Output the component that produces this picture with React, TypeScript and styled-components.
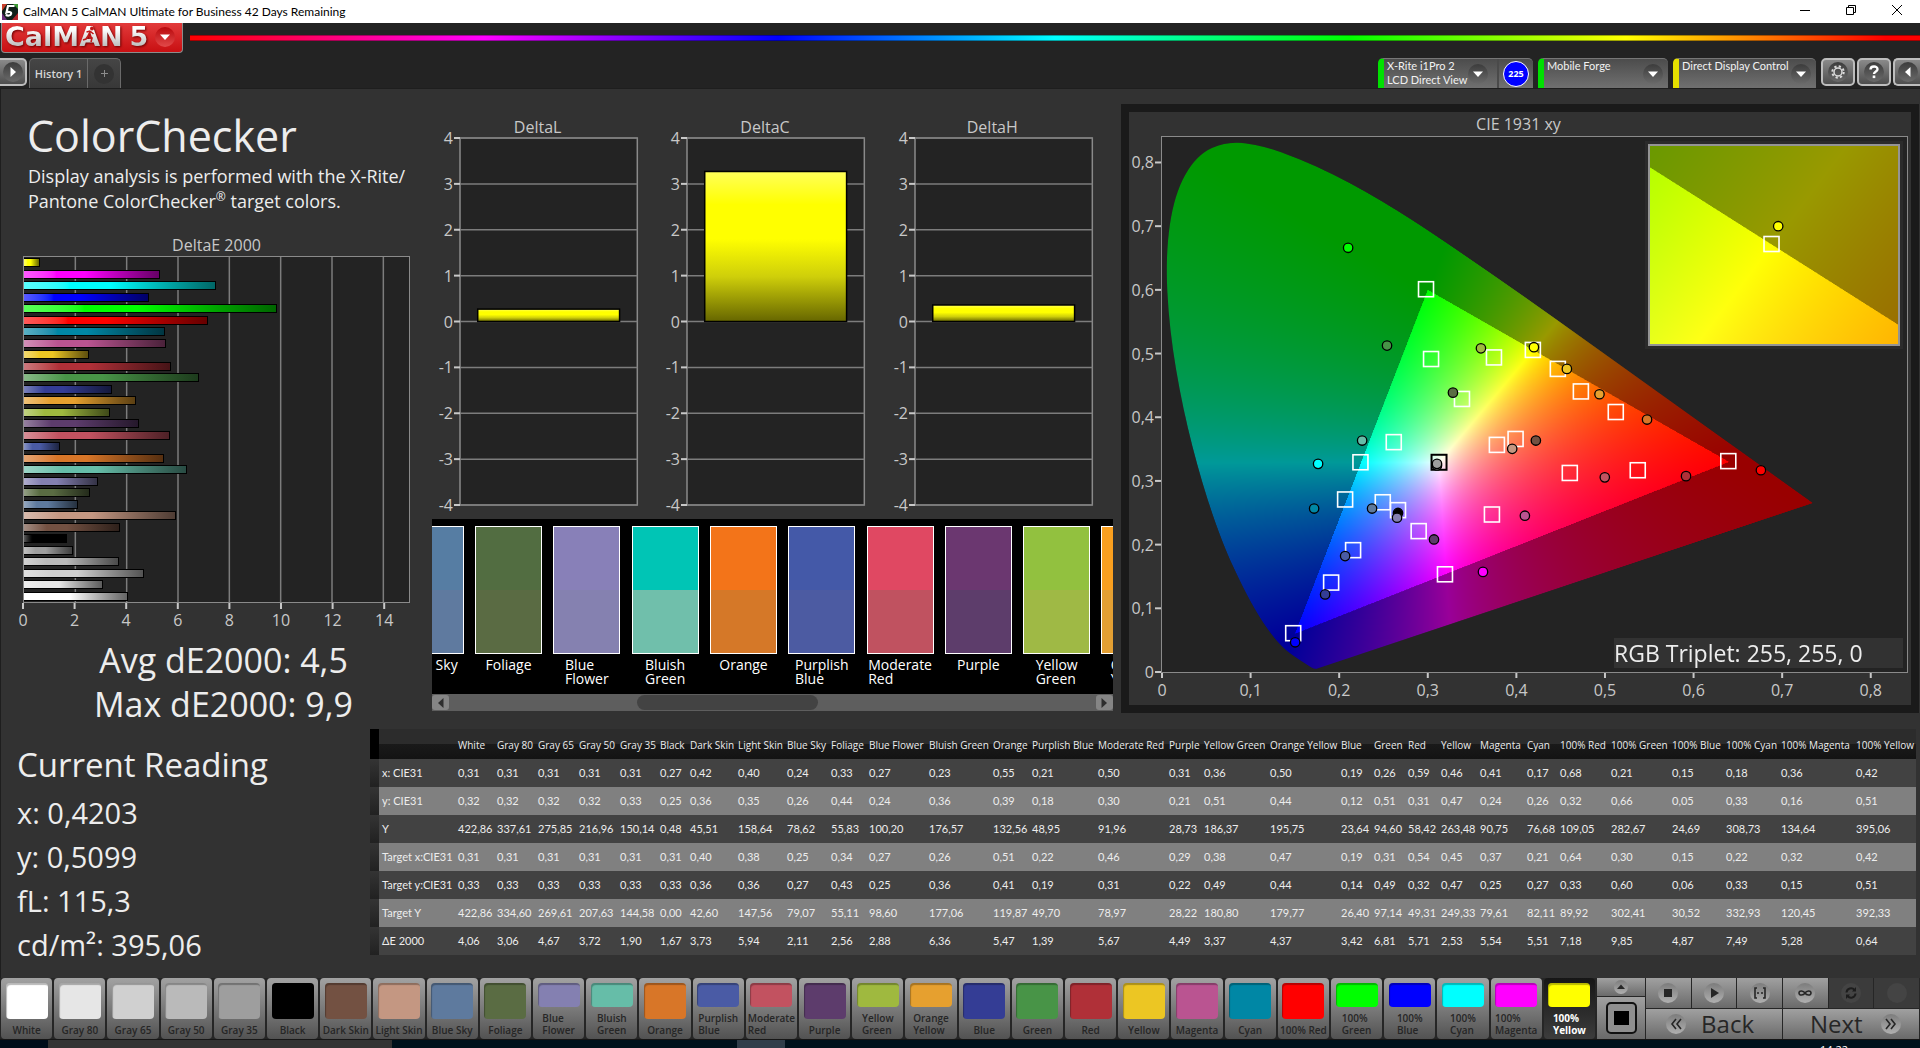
import React, { useLayoutEffect, useRef } from "react";
import styled, { createGlobalStyle, css } from "styled-components";

/* ---------- theme ---------- */

const sans = `"Open Sans", "Noto Sans", sans-serif`;
const compact = `Lato, "Open Sans", sans-serif`;
const ink = "#ededed";
const axisInk = "#c8c8c8";
const axisLine = "#8a8a8a";
const plotBg = "#232323";

const GlobalStyle = createGlobalStyle`
  * { box-sizing: border-box; }
  body { margin: 0; background: #323232; color: ${ink}; font-family: ${sans}; }
  h1, h2, p, dl, dd, dt, ul, figure { margin: 0; padding: 0; }
  ul { list-style: none; }
  button { font-family: inherit; margin: 0; padding: 0; border: 0; background: none; color: inherit; }
`;

/* ---------- data ---------- */

type Patch = {
  name: string;
  lines: string[];
  color: string;
  values: string[];
};

const patch = (name: string, color: string, values: string, lines: string[] = [name]): Patch => ({
  name,
  color,
  lines,
  values: values.split(" "),
});

const patches: Patch[] = [
  patch("White", "#ffffff", "0,31 0,32 422,86 0,31 0,33 422,86 4,06"),
  patch("Gray 80", "#e6e6e6", "0,31 0,32 337,61 0,31 0,33 334,60 3,06"),
  patch("Gray 65", "#d0d0d0", "0,31 0,32 275,85 0,31 0,33 269,61 4,67"),
  patch("Gray 50", "#bababa", "0,31 0,32 216,96 0,31 0,33 207,63 3,72"),
  patch("Gray 35", "#9e9e9e", "0,31 0,33 150,14 0,31 0,33 144,58 1,90"),
  patch("Black", "#000000", "0,27 0,25 0,48 0,31 0,33 0,00 1,67"),
  patch("Dark Skin", "#735142", "0,42 0,36 45,51 0,40 0,36 42,60 3,73"),
  patch("Light Skin", "#c49782", "0,40 0,35 158,64 0,38 0,36 147,56 5,94"),
  patch("Blue Sky", "#5e7a9e", "0,24 0,26 78,62 0,25 0,27 79,07 2,11"),
  patch("Foliage", "#5a6c43", "0,33 0,44 55,83 0,34 0,43 55,11 2,56"),
  patch("Blue Flower", "#8480b1", "0,27 0,24 100,20 0,27 0,25 98,60 2,88", ["Blue", "Flower"]),
  patch("Bluish Green", "#66bda8", "0,23 0,36 176,57 0,26 0,36 177,06 6,36", ["Bluish", "Green"]),
  patch("Orange", "#d87628", "0,55 0,39 132,56 0,51 0,41 119,87 5,47"),
  patch("Purplish Blue", "#4a5ba5", "0,21 0,18 48,95 0,22 0,19 49,70 1,39", ["Purplish", "Blue"]),
  patch("Moderate Red", "#c25260", "0,50 0,30 91,96 0,46 0,31 78,97 5,67", ["Moderate", "Red"]),
  patch("Purple", "#5d3c6c", "0,31 0,21 28,73 0,29 0,22 28,22 4,49"),
  patch("Yellow Green", "#9fb93f", "0,36 0,51 186,37 0,38 0,49 180,80 3,37", ["Yellow", "Green"]),
  patch("Orange Yellow", "#e6a02f", "0,50 0,44 195,75 0,47 0,44 179,77 4,37", ["Orange", "Yellow"]),
  patch("Blue", "#343d95", "0,19 0,12 23,64 0,19 0,14 26,40 3,42"),
  patch("Green", "#489447", "0,26 0,51 94,60 0,31 0,49 97,14 6,81"),
  patch("Red", "#b03038", "0,59 0,31 58,42 0,54 0,32 49,31 5,71"),
  patch("Yellow", "#ecc623", "0,46 0,47 263,48 0,45 0,47 249,33 2,53"),
  patch("Magenta", "#ba5491", "0,41 0,24 90,75 0,37 0,25 79,61 5,54"),
  patch("Cyan", "#0087a5", "0,17 0,26 76,68 0,21 0,27 82,11 5,51"),
  patch("100% Red", "#ff0000", "0,68 0,32 109,05 0,64 0,33 89,92 7,18"),
  patch("100% Green", "#00ff00", "0,21 0,66 282,67 0,30 0,60 302,41 9,85", ["100%", "Green"]),
  patch("100% Blue", "#0000ff", "0,15 0,05 24,69 0,15 0,06 30,52 4,87", ["100%", "Blue"]),
  patch("100% Cyan", "#00ffff", "0,18 0,33 308,73 0,22 0,33 332,93 7,49", ["100%", "Cyan"]),
  patch("100% Magenta", "#ff00ff", "0,36 0,16 134,64 0,32 0,15 120,45 5,28", ["100%", "Magenta"]),
  patch("100% Yellow", "#ffff00", "0,42 0,51 395,06 0,42 0,51 392,33 0,64", ["100%", "Yellow"]),
];

const measures = ["x: CIE31", "y: CIE31", "Y", "Target x:CIE31", "Target y:CIE31", "Target Y", "ΔE 2000"];

const columnWidths = [
  39, 41, 41, 41, 40, 30, 48, 49, 44, 38, 60, 64, 39, 66, 71, 35, 66, 71, 33, 34, 33, 39, 47, 33, 51, 61, 54, 55, 75, 63,
];

const comparisons = [
  { label: "Blue Sky", measured: "#567da3", target: "#5f7a9f" },
  { label: "Foliage", measured: "#526d41", target: "#5a6b43" },
  { label: "Blue\nFlower", measured: "#8880b8", target: "#8581b0" },
  { label: "Bluish\nGreen", measured: "#00c5b5", target: "#70bfab" },
  { label: "Orange", measured: "#f37419", target: "#d57828" },
  { label: "Purplish\nBlue", measured: "#4459a8", target: "#4c5ba2" },
  { label: "Moderate\nRed", measured: "#e04862", target: "#c05260" },
  { label: "Purple", measured: "#6b3770", target: "#5d3d6b" },
  { label: "Yellow\nGreen", measured: "#92c13f", target: "#9fb945" },
  { label: "Orange\nYellow", measured: "#f99f1f", target: "#e39f33" },
];

const targets: [number, number][] = [
  [0.298, 0.601], [0.3037, 0.4914], [0.3747, 0.4939], [0.4186, 0.5057], [0.4468, 0.4759], [0.4728, 0.4405],
  [0.3386, 0.4287], [0.2616, 0.3609], [0.224, 0.3293], [0.2067, 0.2709], [0.2492, 0.2665], [0.2664, 0.2541],
  [0.2897, 0.2212], [0.2157, 0.1913], [0.1909, 0.1404], [0.1481, 0.0609], [0.3194, 0.1534], [0.3724, 0.2473],
  [0.378, 0.3566], [0.3991, 0.3659], [0.4603, 0.3125], [0.5122, 0.4082], [0.537, 0.3168], [0.6392, 0.3311],
];

const readings: [number, number, string][] = [
  [0.2101, 0.666, "#00ff00"], [0.254, 0.5125, "#489447"], [0.36, 0.5082, "#9fb93f"], [0.4198, 0.51, "#ffff00"],
  [0.457, 0.4759, "#ecc623"], [0.4938, 0.4361, "#e6a02f"], [0.3284, 0.4386, "#5a6c43"], [0.2259, 0.3634, "#66bda8"],
  [0.1762, 0.3268, "#00ffff"], [0.1717, 0.2566, "#0087a5"], [0.2371, 0.2566, "#5e7a9e"], [0.2664, 0.2497, "#000000"],
  [0.2653, 0.2423, "#8480b1"], [0.307, 0.2081, "#5d3c6c"], [0.2067, 0.182, "#4a5ba5"], [0.1841, 0.1218, "#343d95"],
  [0.1503, 0.0466, "#0000ff"], [0.3623, 0.1572, "#ff00ff"], [0.4096, 0.2454, "#ba5491"], [0.3953, 0.3504, "#c49782"],
  [0.422, 0.3634, "#735142"], [0.4998, 0.3056, "#c25260"], [0.3104, 0.3243, "#bababa"], [0.3104, 0.3268, "#9e9e9e"],
  [0.5475, 0.3964, "#d87628"], [0.5915, 0.3075, "#b03038"], [0.676, 0.3168, "#ff0000"],
];

const locus: [number, number][] = [
  [0.1741, 0.005], [0.1714, 0.0051], [0.1689, 0.0069], [0.1644, 0.0109], [0.1566, 0.0177], [0.144, 0.0297],
  [0.1355, 0.0399], [0.1241, 0.0578], [0.1096, 0.0868], [0.0913, 0.1327], [0.0687, 0.2007], [0.0454, 0.295],
  [0.0235, 0.4127], [0.0082, 0.5384], [0.0039, 0.6548], [0.0139, 0.7502], [0.0389, 0.812], [0.0743, 0.8338],
  [0.1142, 0.8262], [0.1547, 0.8059], [0.1929, 0.7816], [0.2296, 0.7543], [0.2658, 0.7243], [0.3016, 0.6923],
  [0.3731, 0.6245], [0.4441, 0.5547], [0.5125, 0.4866], [0.5752, 0.4242], [0.627, 0.3725], [0.6658, 0.334],
  [0.6915, 0.3083], [0.719, 0.2809], [0.7347, 0.2653],
];

/* ---------- window frame ---------- */

const Page = styled.div`
  display: flex;
  flex-direction: column;
  min-height: 100vh;
  overflow: hidden;
  background: #323232;
`;

const TitleBar = styled.div`
  display: flex;
  align-items: center;
  height: 23px;
  padding-left: 2px;
  background: #fff;
  color: #000;
  font: 12px/18px ${compact};
`;

const AppTitle = styled.span`
  flex: 1;
  padding-left: 5px;
`;

const WindowButton = styled.button`
  display: grid;
  place-items: center;
  width: 46px;
  height: 23px;
  padding-bottom: 3px;
`;

const Header = styled.header`
  background: #232323;
  border-bottom: 1px solid #1e1e1e;
`;

const BrandRow = styled.div`
  display: flex;
  padding-left: 1px;
`;

const BrandButton = styled.button`
  position: relative;
  display: flex;
  align-items: center;
  justify-content: space-between;
  width: 182px;
  height: 30px;
  padding: 0 7px 2px 3px;
  border: 1px solid #8c8c8c;
  border-top: 0;
  border-radius: 0 0 4px 4px;
  background: linear-gradient(#e23b3b, #c80f12);
  font: 700 27px/26px "DejaVu Sans", sans-serif;
`;

const BrandText = styled.span`
  background: linear-gradient(#ffffff 20%, #b9b9b9 90%);
  -webkit-background-clip: text;
  background-clip: text;
  color: transparent;
  filter: drop-shadow(1px 1px 1px #6d0000);
`;

const Runner = styled.svg`
  position: absolute;
  left: 79px;
  top: 3px;
`;

const Rainbow = styled.div`
  flex: 1;
  height: 6px;
  margin: 12px 0 0 7px;
  border: 1px solid rgba(0, 0, 0, 0.35);
  border-width: 1px 0;
  background: linear-gradient(90deg, #f00, #f0f 17%, #00f 34%, #0ff 50%, #0f0 67%, #ff0 83%, #f00 98%);
`;

const TabRow = styled.div`
  display: flex;
  justify-content: space-between;
  height: 35px;
  padding-top: 5px;
`;

const TabGroup = styled.div`
  display: flex;
  gap: 2px;
`;

const Tab = styled.div`
  display: flex;
  align-items: stretch;
  border: 1px solid #6a6a6a;
  border-bottom: 0;
  border-radius: 5px 5px 0 0;
  background: linear-gradient(#454545, #383838);
`;

const TabButton = styled.button`
  display: grid;
  place-items: center;
  width: 57px;
  color: #d6d6d6;
  font: 600 11px/16px ${sans};

  & + & {
    width: 33px;
    border-left: 1px solid #6a6a6a;
  }
`;

const Knob = styled.span<{ $size?: number; $tone?: string }>`
  display: grid;
  place-items: center;
  flex: none;
  width: ${(p) => p.$size ?? 20}px;
  height: ${(p) => p.$size ?? 20}px;
  border-radius: 50%;
  background: ${(p) => p.$tone ?? "linear-gradient(#3c3c3c, #6a6a6a)"};
`;

const SquareButton = styled.button<{ $flush?: "left" | "right" }>`
  display: grid;
  place-items: center;
  width: 34px;
  height: 28px;
  border: 2px solid #bdbdbd;
  border-radius: 5px;
  background: linear-gradient(#8a8a8a, #4e4e4e);
  ${(p) =>
    p.$flush === "left" &&
    css`
      width: 27px;
      border-left: 0;
      border-radius: 0 5px 5px 0;
    `}
  ${(p) =>
    p.$flush === "right" &&
    css`
      width: 27px;
      border-right: 0;
      border-radius: 5px 0 0 5px;
    `}
`;

const DeviceRow = styled.div`
  display: flex;
  gap: 5px;
`;

const Device = styled.div<{ $accent: string; $width: number }>`
  display: flex;
  width: ${(p) => p.$width}px;
  border-left: 6px solid ${(p) => p.$accent};
  border-top: 1px solid #777;
  border-radius: 5px 5px 0 0;
  background: linear-gradient(#4c4c4c, #707070);
`;

const DeviceButton = styled.button`
  display: flex;
  flex: 1;
  align-items: center;
  justify-content: space-between;
  padding: 0 5px 0 3px;
  color: #f2f2f2;
  font: 11px/14px ${compact};
  text-align: left;

  &:not(:last-child) {
    padding-right: 9px;
  }
`;

const DeviceName = styled.span`
  align-self: flex-start;
  white-space: pre;
`;

const BadgeCell = styled.div`
  display: grid;
  place-items: center;
  width: 36px;
  border-left: 2px solid #4a4a4a;
`;

const Badge = styled.span`
  display: grid;
  place-items: center;
  width: 26px;
  height: 26px;
  border: 1px solid #fff;
  border-radius: 50%;
  background: #00f;
  color: #fff;
  font: 700 9px/12px ${sans};
`;

const ToolGroup = styled.div`
  display: flex;
  gap: 2px;
`;

/* ---------- workspace ---------- */

const Workspace = styled.main`
  display: flex;
  flex: 1;
  flex-direction: column;
  border-left: 1px solid #1e1e1e;
`;

const Upper = styled.section`
  display: grid;
  flex: 1;
  grid-template-columns: 423px minmax(0, 696fr) minmax(0, 798fr);
`;

const Overview = styled.div`
  display: flex;
  flex-direction: column;
  padding: 19px 14px 0 22px;
`;

const Heading = styled.h1`
  padding-left: 4px;
  font: 400 43px/56px ${sans};
`;

const Intro = styled.p`
  padding: 0 0 20px 5px;
  font: 400 18px/25px ${sans};
  white-space: nowrap;
`;

const Registered = styled.sup`
  font-size: 12px;
  line-height: 1;
`;

const ChartTitle = styled.h2`
  color: ${axisInk};
  font: 400 16px/22px ${sans};
  text-align: center;
`;

const ErrorPlot = styled.div`
  position: relative;
  height: 347px;
  border: 1px solid ${axisLine};
  background: ${plotBg};
`;

const ErrorBars = styled.ul`
  position: relative;
  display: flex;
  flex-direction: column;
  justify-content: space-around;
  height: 100%;
`;

const ErrorBar = styled.li<{ $color: string }>`
  height: 9px;
  border: 1px solid #000;
  border-left: 0;
  background: linear-gradient(
    90deg,
    color-mix(in srgb, ${(p) => p.$color}, #fff 35%),
    ${(p) => p.$color} 24%,
    ${(p) => p.$color} 45%,
    color-mix(in srgb, ${(p) => p.$color}, #000 60%)
  );
`;

const GridLines = styled.svg`
  position: absolute;
  inset: 0;
  width: 100%;
  height: 100%;
`;

const AxisSvg = styled.svg`
  display: block;
  width: 100%;
  height: 30px;
  overflow: visible;
  fill: ${axisInk};
  font: 16px ${sans};
`;

const Summary = styled.p`
  padding: 5px 0 0 14px;
  font: 400 34px/44px ${sans};
  text-align: center;
`;

const Middle = styled.div`
  display: flex;
  flex-direction: column;
  padding-top: 27px;
`;

const DeltaRow = styled.div`
  display: grid;
  grid-template-columns: repeat(3, minmax(0, 1fr));
  padding-right: 15px;
`;

const DeltaCard = styled.figure`
  padding: 0 14px 0 36px;

  ${ChartTitle} {
    margin-left: -22px;
  }
`;

const DeltaSvg = styled.svg`
  display: block;
  width: 100%;
  height: 367px;
  overflow: visible;
  fill: ${axisInk};
  font: 16px ${sans};
`;

const Strip = styled.div`
  margin: 14px 8px 0 8px;
  background: #000;
`;

const StripWindow = styled.div`
  overflow: hidden;
  height: 175px;
  padding-top: 7px;
`;

const StripList = styled.ul`
  display: grid;
  grid-auto-flow: column;
  grid-auto-columns: 10.85%;
  margin-left: -6%;
`;

const StripItem = styled.li`
  display: flex;
  flex-direction: column;
  align-items: center;
  color: #fff;
  font: 14px/14px ${sans};
`;

const SwatchPair = styled.div<{ $top: string; $bottom: string }>`
  width: 67px;
  height: 128px;
  margin-bottom: 4px;
  border: 1px solid #fff;
  background: linear-gradient(${(p) => p.$top} 50%, ${(p) => p.$bottom} 50%);
`;

const LabelLines = styled.span`
  white-space: pre;
  text-align: left;
`;

const ScrollTrack = styled.div`
  display: grid;
  grid-template-columns: 17px 1fr 17px;
  height: 17px;
  background: #5e5e5e;
`;

const ScrollArrow = styled.button`
  display: grid;
  place-items: center;
  margin: 1px 0;
  border-radius: 3px;
  background: #858585;
`;

const ScrollRail = styled.div`
  padding: 1px 0;
`;

const ScrollThumb = styled.div`
  width: 28%;
  height: 15px;
  margin-left: 29%;
  border-radius: 8px;
  background: #434343;
`;

/* ---------- chromaticity ---------- */

const GamutPanel = styled.div`
  display: flex;
  flex-direction: column;
  margin: 15px 1px 16px 0;
  padding-right: 3px;
  border: 8px solid #1a1a1a;
`;

const GamutTitle = styled(ChartTitle)`
  line-height: 24px;
`;

const GamutPlot = styled.div`
  position: relative;
  flex: 1;
  margin: 0 0 32px 32px;
  border: 1px solid ${axisLine};
  background: ${plotBg};
`;

const GamutCanvas = styled.canvas`
  position: absolute;
  inset: 0;
  width: 100%;
  height: 100%;
`;

const GamutOverlay = styled.svg`
  position: absolute;
  inset: 0;
  width: 100%;
  height: 100%;
  overflow: visible;
  fill: ${axisInk};
  font: 16px ${sans};
`;

const Inset = styled.div`
  position: absolute;
  top: 7px;
  right: 7px;
  width: 252px;
  height: 202px;
  border: 2px solid #949494;
  outline: 3px solid #2b2b2b;
`;

const Triplet = styled.p`
  position: absolute;
  right: 4px;
  bottom: 4px;
  width: 289px;
  background: #323232;
  font: 400 23px/30px ${sans};
`;

/* ---------- lower area ---------- */

const Lower = styled.section`
  display: grid;
  grid-template-columns: 369px minmax(0, 1fr);
  padding: 0 4px 0 0;
`;

const Reading = styled.div`
  padding: 12px 0 11px 16px;
  white-space: nowrap;
`;

const ReadingTitle = styled.h2`
  padding-bottom: 2px;
  font: 400 33px/48px ${sans};
`;

const ReadingRow = styled.p`
  font: 400 29px/44px ${sans};
`;

const Table = styled.table`
  width: 100%;
  table-layout: fixed;
  border-collapse: collapse;
  align-self: start;
  font: 11px/18px ${compact};
`;

const HeadRow = styled.tr`
  height: 30px;
  background: linear-gradient(#2c2c2c 50%, #1a1a1a 50%, #131313);

  th {
    padding: 2px 0 0 3px;
    font: 400 10px/18px ${sans};
    text-align: left;
    white-space: nowrap;
  }

  th:first-child {
    background: #000;
  }
`;

const BodyRow = styled.tr`
  height: 28px;
  background: #424242;

  &:nth-child(even) {
    background: #808080;
  }

  th,
  td {
    padding: 0 0 0 3px;
    font-weight: 400;
    text-align: left;
    white-space: nowrap;
  }

  td:first-child {
    background: linear-gradient(#343434, #212121);
  }
`;

/* ---------- bottom toolbar ---------- */

const Toolbar = styled.nav`
  display: grid;
  grid-template-columns: minmax(0, 1fr) 48px 273px;
  height: 62px;
  gap: 0 1px;
  border-bottom: 1px solid #161616;
  padding-right: 1px;
  background: #262626;
`;

const PatchList = styled.div`
  display: grid;
  grid-template-columns: repeat(30, minmax(0, 1fr));
`;

const PatchButton = styled.button<{ $active?: boolean }>`
  display: flex;
  flex-direction: column;
  align-items: center;
  justify-content: space-between;
  margin: 0 1px;
  padding: 5px 0 3px;
  border-radius: 4px;
  background: ${(p) => (p.$active ? "linear-gradient(#161616, #3c3c3c)" : "linear-gradient(#a2a2a2, #525252)")};
  color: ${(p) => (p.$active ? "#fff" : "#262626")};
  font: ${(p) => (p.$active ? 700 : 600)} 10px/12px ${sans};
`;

const PatchColor = styled.span<{ $color: string; $short: boolean }>`
  width: 42px;
  height: ${(p) => (p.$short ? 24 : 36)}px;
  border-radius: 4px;
  background: ${(p) => p.$color};
  box-shadow: inset 1px 2px 1px rgba(0, 0, 0, 0.28);
`;

const Stack = styled.div`
  display: grid;
  grid-template-rows: 18px 1fr;
  gap: 1px;
`;

const GreyButton = styled.button<{ $dark?: boolean }>`
  display: flex;
  align-items: center;
  justify-content: center;
  background: ${(p) => (p.$dark ? "#3b3b3b" : "linear-gradient(#a0a0a0, #6a6a6a)")};
  color: #262626;
`;

const PatternIcon = styled.span`
  display: grid;
  place-items: center;
  width: 31px;
  height: 32px;
  border: 2px solid #111;
  border-radius: 5px;
  background: #8f8f8f;

  &::after {
    content: "";
    width: 15px;
    height: 14px;
    background: #000;
  }
`;

const Transport = styled.div`
  display: grid;
  grid-template-rows: 30px 1fr;
  gap: 1px;
`;

const MediaRow = styled.div`
  display: grid;
  grid-template-columns: repeat(6, 1fr);
  gap: 1px;
`;

const StepRow = styled.div`
  display: grid;
  grid-template-columns: 1fr 1fr;
  gap: 1px;
`;

const StepButton = styled(GreyButton)`
  justify-content: space-between;
  padding: 0 28px 0 20px;
  font: 400 24px/28px ${sans};

  & + & {
    padding: 0 18px 0 27px;
  }
`;

const Taskbar = styled.footer`
  display: grid;
  grid-template-columns: 48px 344px 345px 48px 1fr 110px;
  height: 8px;
  overflow: hidden;
  background: #00121c;
  color: #fff;
  font: 11px/12px ${sans};
`;

const TaskSlot = styled.span<{ $tone?: string }>`
  background: ${(p) => p.$tone ?? "transparent"};
  padding: 4px 0 0 10px;
`;

/* ---------- pieces ---------- */

const Caret = ({ dir = "down", color = "#fff", size = 10 }: { dir?: string; color?: string; size?: number }) => {
  const turn = { down: 0, left: 90, up: 180, right: 270 }[dir];
  return (
    <svg width={size} height={size} viewBox="0 0 10 10" aria-hidden="true">
      <path d="M0 2.5h10L5 8z" fill={color} transform={`rotate(${turn} 5 5)`} />
    </svg>
  );
};

const ErrorChart = () => {
  const ticks = [0, 2, 4, 6, 8, 10, 12, 14];
  const at = (v: number) => `${(v / 15) * 100}%`;
  return (
    <figure>
      <ChartTitle>DeltaE 2000</ChartTitle>
      <ErrorPlot>
        <GridLines aria-hidden="true">
          {ticks.slice(1).map((t) => (
            <line key={t} x1={at(t)} x2={at(t)} y1="0" y2="100%" stroke="#7c7c7c" strokeWidth="1.5" />
          ))}
        </GridLines>
        <ErrorBars>
          {[...patches].reverse().map((p) => (
            <ErrorBar key={p.name} $color={p.color} title={p.name} style={{ width: at(parseFloat(p.values[6].replace(",", "."))) }} />
          ))}
        </ErrorBars>
      </ErrorPlot>
      <AxisSvg>
        {ticks.map((t) => (
          <g key={t}>
            <line x1={at(t)} x2={at(t)} y1="0" y2="6" stroke={axisInk} strokeWidth="2" />
            <text x={at(t)} y="23" textAnchor="middle">
              {t}
            </text>
          </g>
        ))}
      </AxisSvg>
    </figure>
  );
};

const DeltaChart = ({ title, value }: { title: string; value: number }) => {
  const at = (v: number) => `${((4 - v) / 8) * 100}%`;
  const id = `fill-${title}`;
  return (
    <DeltaCard>
      <ChartTitle>{title}</ChartTitle>
      <DeltaSvg>
        <defs>
          <linearGradient id={id} x1="0" y1="0" x2="0" y2="1">
            <stop offset="0" stopColor="#ffff59" />
            <stop offset="0.22" stopColor="#ffff00" />
            <stop offset="0.45" stopColor="#ffff00" />
            <stop offset="0.7" stopColor="#cfcf0a" />
            <stop offset="1" stopColor="#666600" />
          </linearGradient>
        </defs>
        <rect width="100%" height="100%" fill={plotBg} stroke={axisLine} strokeWidth="1.5" />
        {[4, 3, 2, 1, 0, -1, -2, -3, -4].map((t) => (
          <g key={t}>
            <line x1="0" x2="100%" y1={at(t)} y2={at(t)} stroke="#7c7c7c" strokeWidth="1.5" />
            <line x1="-6" x2="0" y1={at(t)} y2={at(t)} stroke={axisInk} strokeWidth="2" />
            <text x="-7" y={at(t)} dy="6" textAnchor="end">
              {t}
            </text>
          </g>
        ))}
        <rect x="10%" width="80%" y={at(value)} height={`${(value / 8) * 100}%`} fill={`url(#${id})`} stroke="#000" strokeWidth="1.5" />
      </DeltaSvg>
    </DeltaCard>
  );
};

type Range = { x0: number; x1: number; y0: number; y1: number };

/* Paints the xy plane: linear-light RGB inside the gamut, the clipped hue at 60% outside it. */
const paintPlane = (canvas: HTMLCanvasElement, r: Range, clipToLocus: boolean) => {
  const ctx = canvas.getContext("2d");
  if (!ctx) return;
  const { width: w, height: h } = canvas;
  const layer = document.createElement("canvas");
  layer.width = w;
  layer.height = h;
  const layerCtx = layer.getContext("2d");
  if (!layerCtx) return;
  const image = layerCtx.createImageData(w, h);
  for (let j = 0; j < h; j++) {
    const y = Math.max(0.001, r.y1 - ((j + 0.5) / h) * (r.y1 - r.y0));
    for (let i = 0; i < w; i++) {
      const x = r.x0 + ((i + 0.5) / w) * (r.x1 - r.x0);
      const z = 1 - x - y;
      const red = 3.2406 * x - 1.5372 * y - 0.4986 * z;
      const green = -0.9689 * x + 1.8758 * y + 0.0415 * z;
      const blue = 0.0557 * x - 0.204 * y + 1.057 * z;
      const inside = red >= 0 && green >= 0 && blue >= 0;
      const k = ((inside ? 1 : 0.6) * 255) / Math.max(red, green, blue);
      const o = (j * w + i) * 4;
      image.data[o] = Math.max(0, red) * k;
      image.data[o + 1] = Math.max(0, green) * k;
      image.data[o + 2] = Math.max(0, blue) * k;
      image.data[o + 3] = 255;
    }
  }
  layerCtx.putImageData(image, 0, 0);
  ctx.clearRect(0, 0, w, h);
  ctx.save();
  if (clipToLocus) {
    const px = (p: [number, number]): [number, number] => [
      ((p[0] - r.x0) / (r.x1 - r.x0)) * w,
      ((r.y1 - p[1]) / (r.y1 - r.y0)) * h,
    ];
    ctx.beginPath();
    ctx.moveTo(...px(locus[0]));
    for (let n = 1; n < locus.length - 1; n++) {
      const [cx, cy] = px(locus[n]);
      const [nx, ny] = px(locus[n + 1]);
      ctx.quadraticCurveTo(cx, cy, (cx + nx) / 2, (cy + ny) / 2);
    }
    ctx.lineTo(...px(locus[locus.length - 1]));
    ctx.closePath();
    ctx.clip();
  }
  ctx.drawImage(layer, 0, 0);
  ctx.restore();
};

const Plane = ({ range, width, height, clip = false }: { range: Range; width: number; height: number; clip?: boolean }) => {
  const ref = useRef<HTMLCanvasElement>(null);
  useLayoutEffect(() => {
    if (ref.current) paintPlane(ref.current, range, clip);
  }, [range, clip]);
  return <GamutCanvas ref={ref} width={width} height={height} />;
};

const fullRange: Range = { x0: 0, x1: 0.841, y0: 0, y1: 0.84 };
const insetRange: Range = { x0: 0.3947, x1: 0.4447, y0: 0.4802, y1: 0.5302 };

const TargetMark = ({ x, y, dark }: { x: string; y: string; dark?: boolean }) => (
  <svg x={x} y={y} overflow="visible">
    <rect x="-7.5" y="-7.5" width="15" height="15" fill="none" stroke={dark ? "#000" : "#fff"} strokeWidth={dark ? 2 : 1.6} />
  </svg>
);

const ReadingMark = ({ x, y, color }: { x: string; y: string; color: string }) => (
  <circle cx={x} cy={y} r="4.7" fill={color} stroke="#000" strokeWidth="1.3" />
);

const comma = (v: number) => (v === 0 ? "0" : v.toFixed(1).replace(".", ","));

const Chromaticity = () => {
  const px = (v: number) => `${(v / fullRange.x1) * 100}%`;
  const py = (v: number) => `${(1 - v / fullRange.y1) * 100}%`;
  const ticks = [0, 0.1, 0.2, 0.3, 0.4, 0.5, 0.6, 0.7, 0.8];
  return (
    <GamutPanel>
      <GamutTitle>CIE 1931 xy</GamutTitle>
      <GamutPlot>
        <Plane range={fullRange} width={1488} height={1068} clip />
        <GamutOverlay>
          {ticks.map((t) => (
            <g key={t}>
              <svg x={px(t)} y="100%" overflow="visible">
                <line y1="1" y2="6" stroke={axisInk} strokeWidth="2" />
                <text y="24" textAnchor="middle">
                  {comma(t)}
                </text>
              </svg>
              <svg x="0" y={py(t)} overflow="visible">
                <line x1="-7" x2="-1" stroke={axisInk} strokeWidth="2" />
                <text x="-8" y="6" textAnchor="end">
                  {comma(t)}
                </text>
              </svg>
            </g>
          ))}
          {targets.map(([x, y]) => (
            <TargetMark key={`${x}-${y}`} x={px(x)} y={py(y)} />
          ))}
          <TargetMark x={px(0.3127)} y={py(0.3293)} dark />
          {readings.map(([x, y, c]) => (
            <ReadingMark key={`${x}-${y}`} x={px(x)} y={py(y)} color={c} />
          ))}
        </GamutOverlay>
        <Inset>
          <Plane range={insetRange} width={496} height={396} />
          <GamutOverlay>
            <TargetMark x="49%" y="49.5%" />
            <ReadingMark x="51.7%" y="40.5%" color="#ffff00" />
          </GamutOverlay>
        </Inset>
        <Triplet>RGB Triplet: 255, 255, 0</Triplet>
      </GamutPlot>
    </GamutPanel>
  );
};

const DataTable = () => (
  <Table>
    <colgroup>
      <col style={{ width: 9 }} />
      <col style={{ width: 76 }} />
      {columnWidths.map((w, i) => (
        <col key={patches[i].name} style={{ width: w }} />
      ))}
    </colgroup>
    <thead>
      <HeadRow>
        <th />
        <th />
        {patches.map((p) => (
          <th key={p.name} scope="col">
            {p.name}
          </th>
        ))}
      </HeadRow>
    </thead>
    <tbody>
      {measures.map((m, row) => (
        <BodyRow key={m}>
          <td />
          <th scope="row">{m}</th>
          {patches.map((p) => (
            <td key={p.name}>{p.values[row]}</td>
          ))}
        </BodyRow>
      ))}
    </tbody>
  </Table>
);

const knobTone = "linear-gradient(#7c7c7c, #b0b0b0)";

const mediaIcons: { name: string; dark?: boolean; art: React.ReactNode }[] = [
  { name: "Stop", art: <rect x="3" y="3" width="8" height="8" fill="#262626" /> },
  { name: "Play", art: <path d="M4 2l8 5-8 5z" fill="#262626" /> },
  {
    name: "Read series",
    art: (
      <g fill="none" stroke="#262626" strokeWidth="1.6">
        <path d="M4 2H2v10h2M10 2h2v10h-2" />
        <path d="M4 7h2M8 7h2" />
      </g>
    ),
  },
  {
    name: "Read continuously",
    art: (
      <path
        d="M7 7C5.500 4.500 1 4 1 7s4.500 2.500 6 0 6-3 6 0-4.500 2.500-6 0z"
        fill="none"
        stroke="#262626"
        strokeWidth="1.600"
      />
    ),
  },
  {
    name: "Refresh",
    dark: true,
    art: (
      <g fill="none" stroke="#1d1d1d" strokeWidth="2">
        <path d="M2.500 6.500A4.500 4.500 0 0 1 10.500 4M11.500 7.500A4.500 4.500 0 0 1 3.500 10" />
        <path d="M12 1v4.500H8zM2 13V8.500h4z" fill="#1d1d1d" stroke="none" />
      </g>
    ),
  },
  { name: "Record", dark: true, art: null },
];

export default function App() {
  return (
    <>
      <GlobalStyle />
      <Page>
        <TitleBar>
          <svg width="16" height="16" viewBox="0 0 16 16" aria-hidden="true">
            <rect width="16" height="16" fill="#10201a" />
            <path d="M0 0h5L0 7z" fill="#c8402c" />
            <path d="M0 9l5 7H0z" fill="#6a2b7a" />
            <path d="M11 0h5v5z" fill="#3d9a35" />
            <path d="M16 9v7h-6z" fill="#b3262c" />
            <path d="M12.500 2H6L4.500 8.500c2-1 5-.7 4.600 1.400C8.700 12 5.500 11.700 3.700 11" fill="none" stroke="#fff" strokeWidth="2.200" />
          </svg>
          <AppTitle>CalMAN 5 CalMAN Ultimate for Business 42 Days Remaining</AppTitle>
          <WindowButton aria-label="Minimize">
            <svg width="10" height="10">
              <path d="M0 5.500h10" stroke="#000" />
            </svg>
          </WindowButton>
          <WindowButton aria-label="Restore">
            <svg width="10" height="10" fill="none" stroke="#000">
              <path d="M.5 2.500h7v7h-7zM2.500 2.500v-2h7v7h-2" />
            </svg>
          </WindowButton>
          <WindowButton aria-label="Close">
            <svg width="10" height="10" stroke="#000">
              <path d="M0 0l10 10M10 0L0 10" />
            </svg>
          </WindowButton>
        </TitleBar>

        <Header>
          <BrandRow>
            <BrandButton aria-label="CalMAN 5 menu">
              <BrandText>CalMAN</BrandText>
              <BrandText>5</BrandText>
              <Runner width="18" height="18" viewBox="0 0 18 18" aria-hidden="true">
                <circle cx="11" cy="2.500" r="2" fill="#c01818" />
                <path d="M9.500 5L7 10l4 2-1 4M7 10l-2 3-3 1M9.500 5l-4 1M9.500 5.500l3 2.500" fill="none" stroke="#c01818" strokeWidth="1.600" />
              </Runner>
              <Knob $tone="linear-gradient(#b8080c, #e24a4a)">
                <Caret />
              </Knob>
            </BrandButton>
            <Rainbow />
          </BrandRow>

          <TabRow>
            <TabGroup>
              <SquareButton $flush="left" aria-label="Show workflow">
                <Knob>
                  <Caret dir="right" />
                </Knob>
              </SquareButton>
              <Tab>
                <TabButton>History 1</TabButton>
                <TabButton aria-label="Add history">
                  <Knob $tone="#333">
                    <svg width="7" height="7" stroke="#8c8c8c">
                      <path d="M3.500 0v7M0 3.500h7" />
                    </svg>
                  </Knob>
                </TabButton>
              </Tab>
            </TabGroup>

            <DeviceRow>
              <Device $accent="#00e000" $width={155}>
                <DeviceButton>
                  <DeviceName>{"X-Rite i1Pro 2\nLCD Direct View"}</DeviceName>
                  <Knob>
                    <Caret />
                  </Knob>
                </DeviceButton>
                <BadgeCell>
                  <Badge>225</Badge>
                </BadgeCell>
              </Device>
              <Device $accent="#00e000" $width={130}>
                <DeviceButton>
                  <DeviceName>Mobile Forge</DeviceName>
                  <Knob>
                    <Caret />
                  </Knob>
                </DeviceButton>
              </Device>
              <Device $accent="#e6e000" $width={143}>
                <DeviceButton>
                  <DeviceName>Direct Display Control</DeviceName>
                  <Knob>
                    <Caret />
                  </Knob>
                </DeviceButton>
              </Device>
              <ToolGroup>
                <SquareButton aria-label="Settings">
                  <Knob>
                    <svg width="14" height="14" viewBox="0 0 14 14" fill="none" stroke="#dcdcdc">
                      <circle cx="7" cy="7" r="4" strokeWidth="1.500" />
                      <circle cx="7" cy="7" r="5.700" strokeWidth="2" strokeDasharray="2.240 2.240" />
                    </svg>
                  </Knob>
                </SquareButton>
                <SquareButton aria-label="Help">
                  <Knob>
                    <svg width="12" height="14" viewBox="0 0 12 14">
                      <path d="M2.500 4.500C2.500 0.500 9.500 0.500 9.500 4.200 9.500 6.500 6 6.300 6 9" fill="none" stroke="#fff" strokeWidth="2.400" />
                      <rect x="4.700" y="10.500" width="2.600" height="2.600" fill="#fff" />
                    </svg>
                  </Knob>
                </SquareButton>
                <SquareButton $flush="right" aria-label="Collapse panel">
                  <Knob>
                    <Caret dir="left" />
                  </Knob>
                </SquareButton>
              </ToolGroup>
            </DeviceRow>
          </TabRow>
        </Header>

        <Workspace>
          <Upper>
            <Overview>
              <Heading>ColorChecker</Heading>
              <Intro>
                Display analysis is performed with the X-Rite/
                <br />
                Pantone ColorChecker<Registered>®</Registered> target colors.
              </Intro>
              <ErrorChart />
              <Summary>
                Avg dE2000: 4,5
                <br />
                Max dE2000: 9,9
              </Summary>
            </Overview>

            <Middle>
              <DeltaRow>
                <DeltaChart title="DeltaL" value={0.27} />
                <DeltaChart title="DeltaC" value={3.27} />
                <DeltaChart title="DeltaH" value={0.36} />
              </DeltaRow>
              <Strip>
                <StripWindow>
                  <StripList>
                    {comparisons.map((c) => (
                      <StripItem key={c.label}>
                        <SwatchPair $top={c.measured} $bottom={c.target} />
                        <LabelLines>{c.label}</LabelLines>
                      </StripItem>
                    ))}
                  </StripList>
                </StripWindow>
                <ScrollTrack>
                  <ScrollArrow aria-label="Scroll left">
                    <Caret dir="left" color="#2e2e2e" />
                  </ScrollArrow>
                  <ScrollRail>
                    <ScrollThumb />
                  </ScrollRail>
                  <ScrollArrow aria-label="Scroll right">
                    <Caret dir="right" color="#2e2e2e" />
                  </ScrollArrow>
                </ScrollTrack>
              </Strip>
            </Middle>

            <Chromaticity />
          </Upper>

          <Lower>
            <Reading>
              <ReadingTitle>Current Reading</ReadingTitle>
              <ReadingRow>x: 0,4203</ReadingRow>
              <ReadingRow>y: 0,5099</ReadingRow>
              <ReadingRow>fL: 115,3</ReadingRow>
              <ReadingRow>cd/m²: 395,06</ReadingRow>
            </Reading>
            <DataTable />
          </Lower>
        </Workspace>

        <Toolbar>
          <PatchList>
            {patches.map((p) => (
              <PatchButton key={p.name} $active={p.name === "100% Yellow"}>
                <PatchColor $color={p.color} $short={p.lines.length > 1} />
                <LabelLines>{p.lines.join("\n")}</LabelLines>
              </PatchButton>
            ))}
          </PatchList>
          <Stack>
            <GreyButton aria-label="Expand">
              <Knob $size={14} $tone={knobTone}>
                <Caret dir="up" color="#262626" size={8} />
              </Knob>
            </GreyButton>
            <GreyButton aria-label="Pattern window">
              <PatternIcon />
            </GreyButton>
          </Stack>
          <Transport>
            <MediaRow>
              {mediaIcons.map((m) => (
                <GreyButton key={m.name} aria-label={m.name} $dark={m.dark}>
                  <Knob $tone={m.dark ? "#444" : knobTone}>
                    <svg width="14" height="14" viewBox="0 0 14 14">
                      {m.art}
                    </svg>
                  </Knob>
                </GreyButton>
              ))}
            </MediaRow>
            <StepRow>
              <StepButton>
                <Knob $tone={knobTone}>
                  <svg width="12" height="12" fill="none" stroke="#262626" strokeWidth="1.600">
                    <path d="M6 1L2 6l4 5M11 1L7 6l4 5" />
                  </svg>
                </Knob>
                Back
              </StepButton>
              <StepButton>
                Next
                <Knob $tone={knobTone}>
                  <svg width="12" height="12" fill="none" stroke="#262626" strokeWidth="1.600">
                    <path d="M1 1l4 5-4 5M6 1l4 5-4 5" />
                  </svg>
                </Knob>
              </StepButton>
            </StepRow>
          </Transport>
        </Toolbar>

        <Taskbar>
          <TaskSlot $tone="#000d1a" />
          <TaskSlot $tone="#333" />
          <TaskSlot />
          <TaskSlot $tone="#303e4a" />
          <TaskSlot />
          <TaskSlot>14:22</TaskSlot>
        </Taskbar>
      </Page>
    </>
  );
}
